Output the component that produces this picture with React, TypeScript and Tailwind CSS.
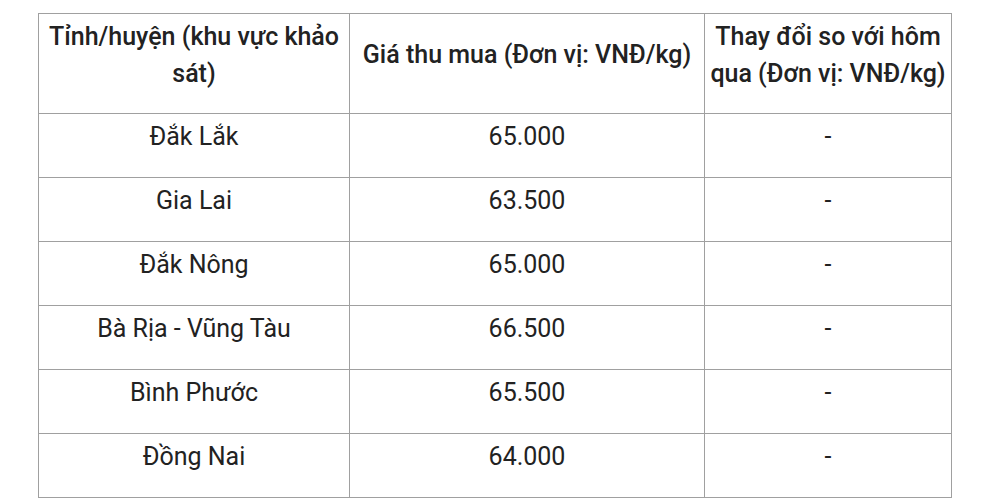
const ROWS = [
  { area: "Đắk Lắk", price: "65.000", change: "-" },
  { area: "Gia Lai", price: "63.500", change: "-" },
  { area: "Đắk Nông", price: "65.000", change: "-" },
  { area: "Bà Rịa - Vũng Tàu", price: "66.500", change: "-" },
  { area: "Bình Phước", price: "65.500", change: "-" },
  { area: "Đồng Nai", price: "64.000", change: "-" },
];

const HEADERS = [
  "Tỉnh/huyện (khu vực khảo sát)",
  "Giá thu mua (Đơn vị: VNĐ/kg)",
  "Thay đổi so với hôm qua (Đơn vị: VNĐ/kg)",
];

export default function App() {
  return (
    <div
      className="min-h-screen bg-white pl-[38px] pr-[37px] pt-[13px] text-[#222]"
      style={{ fontFamily: "Roboto, 'Liberation Sans', sans-serif" }}
    >
      <table className="w-full table-fixed border-collapse border border-[#a0a0a0] text-[25px] leading-[37px]">
        <colgroup>
          <col className="w-[311px]" />
          <col className="w-[355px]" />
          <col />
        </colgroup>
        <thead>
          <tr className="h-[100px]">
            {HEADERS.map((h) => (
              <th key={h} className="border border-[#a0a0a0] px-[3px] align-middle text-center font-medium">
                <p className="mb-[18px]">{h}</p>
              </th>
            ))}
          </tr>
        </thead>
        <tbody>
          {ROWS.map((r) => (
            <tr key={r.area} className="h-[64px]">
              {[r.area, r.price, r.change].map((v, i) => (
                <td key={i} className="border border-[#a0a0a0] px-[3px] align-middle text-center">
                  <p className="mb-[18px]">{v}</p>
                </td>
              ))}
            </tr>
          ))}
        </tbody>
      </table>
    </div>
  );
}
